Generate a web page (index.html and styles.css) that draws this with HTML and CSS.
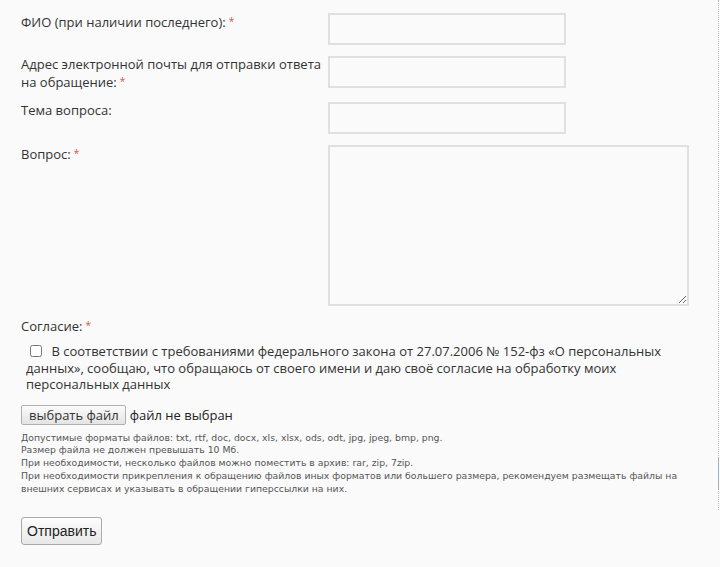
FILE: index.html
```html
<!DOCTYPE html>
<html lang="ru">
<head>
<meta charset="utf-8">
<title>Обращение</title>
<link rel="stylesheet" href="styles.css">
</head>
<body>
<div class="page">
  <form class="form">
    <div class="row">
      <label class="label">ФИО (при наличии последнего):<span class="req">*</span></label>
      <input class="field" type="text">
    </div>
    <div class="row">
      <label class="label">Адрес электронной почты для отправки ответа на обращение:<span class="req">*</span></label>
      <input class="field" type="text">
    </div>
    <div class="row">
      <label class="label">Тема вопроса:</label>
      <input class="field" type="text">
    </div>
    <div class="row">
      <label class="label">Вопрос:<span class="req">*</span></label>
      <textarea class="area"></textarea>
    </div>
    <div class="consent">
      <div class="label">Согласие:<span class="req">*</span></div>
      <p class="consent-text"><input class="check" type="checkbox"> В соответствии с требованиями федерального закона от 27.07.2006 № 152-фз «О персональных данных», сообщаю, что обращаюсь от своего имени и даю своё согласие на обработку моих персональных данных</p>
    </div>
    <div class="file">
      <span class="file-btn">выбрать файл</span><span class="file-name">файл не выбран</span>
    </div>
    <div class="hint">
      Допустимые форматы файлов: txt, rtf, doc, docx, xls, xlsx, ods, odt, jpg, jpeg, bmp, png.<br>
      Размер файла не должен превышать 10 Мб.<br>
      При необходимости, несколько файлов можно поместить в архив: rar, zip, 7zip.<br>
      При необходимости прикрепления к обращению файлов иных форматов или большего размера, рекомендуем размещать файлы на внешних сервисах и указывать в обращении гиперссылки на них.
    </div>
    <div class="submit-row"><button class="submit" type="button">Отправить</button></div>
  </form>
  <div class="edge"><div class="edge-thumb"></div></div>
</div>
</body>
</html>
```
FILE: styles.css
```css
html, body { margin: 0; padding: 0; }
body { background: #fafafa; font-family: "Open Sans", "DejaVu Sans", sans-serif; color: #333; width: 720px; height: 567px; overflow: hidden; }
.page { display: flex; height: 567px; }
.form { flex: 1; padding: 13px 0 0 21px; }
.edge { width: 1px; margin-right: 1px; border-left: 1px dotted #bcbcbc; height: 510px; display: flex; flex-direction: column; justify-content: flex-end; padding-bottom: 20px; box-sizing: border-box; }
.edge-thumb { height: 32px; width: 1px; margin-left: -1px; background: #9fb3c0; }
.row { display: flex; align-items: flex-start; margin-bottom: 11px; }
.label { width: 307px; font-size: 13px; line-height: 17px; color: #333; }
.req { color: #d9534f; font-size: 10px; margin-left: 3px; vertical-align: 2px; }
.field { box-sizing: border-box; width: 238px; height: 32px; border: 2px solid #e0e0e0; background: #fafafa; margin: 0; padding: 0 6px; }
.area { box-sizing: border-box; width: 361px; height: 161px; border: 2px solid #e0e0e0; background: #fafafa; margin: 0; resize: both; }
.consent { margin-top: 4px; }
.consent-text { margin: 8px 20px 0 5px; font-size: 13px; line-height: 16.5px; color: #333; }
.check { width: 12px; height: 12px; margin: 0 6px 0 4px; vertical-align: -1px; }
.file { margin-top: 12px; display: flex; align-items: center; font-size: 13px; color: #222; }
.file-btn { box-sizing: border-box; height: 20px; padding: 0 6px 0 7px; border: 1px solid #b0b0b0; border-radius: 2px; background: linear-gradient(#fbfbfb, #e4e4e4); line-height: 18px; margin-right: 4px; color: #333; }
.file-name { color: #222; }
.hint { margin-top: 7px; font-family: "DejaVu Sans", Verdana, sans-serif; font-size: 9.3px; line-height: 12.8px; color: #555; padding-right: 30px; }
.submit-row { margin-top: 22px; }
.submit { font-family: "Liberation Sans", Arial, sans-serif; font-size: 14px; color: #222; height: 28px; padding: 0 5px; border: 1px solid #aaa; border-radius: 3px; background: linear-gradient(#fdfdfd, #e8e8e8); }
```
